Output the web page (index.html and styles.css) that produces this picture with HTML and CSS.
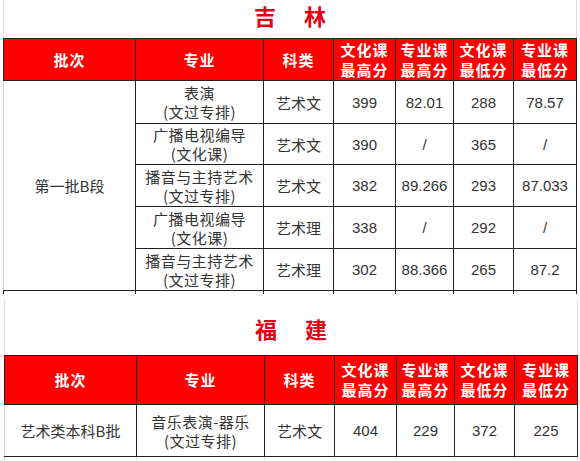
FILE: index.html
```html
<!DOCTYPE html>
<html lang="zh">
<head>
<meta charset="utf-8">
<link rel="stylesheet" href="styles.css">
</head>
<body>
<div class="page">
  <section class="sheet sheet-jilin">
    <div class="title title-jilin"><span>吉</span><span>林</span></div>
    <table class="scores">
      <colgroup>
        <col class="c-batch"><col class="c-major"><col class="c-type">
        <col class="c-s1"><col class="c-s2"><col class="c-s3"><col class="c-s4">
      </colgroup>
      <thead>
        <tr class="head head-jilin">
          <th>批次</th><th>专业</th><th>科类</th>
          <th>文化课<br>最高分</th><th>专业课<br>最高分</th><th>文化课<br>最低分</th><th>专业课<br>最低分</th>
        </tr>
      </thead>
      <tbody>
        <tr class="r43">
          <td class="batch" rowspan="5">第一批B段</td>
          <td class="major">表演<br>(文过专排)</td><td>艺术文</td>
          <td class="num">399</td><td class="num">82.01</td><td class="num">288</td><td class="num">78.57</td>
        </tr>
        <tr class="r41">
          <td class="major">广播电视编导<br>(文化课)</td><td>艺术文</td>
          <td class="num">390</td><td class="num">/</td><td class="num">365</td><td class="num">/</td>
        </tr>
        <tr class="r42">
          <td class="major">播音与主持艺术<br>(文过专排)</td><td>艺术文</td>
          <td class="num">382</td><td class="num">89.266</td><td class="num">293</td><td class="num">87.033</td>
        </tr>
        <tr class="r42">
          <td class="major">广播电视编导<br>(文化课)</td><td>艺术理</td>
          <td class="num">338</td><td class="num">/</td><td class="num">292</td><td class="num">/</td>
        </tr>
        <tr class="r42">
          <td class="major">播音与主持艺术<br>(文过专排)</td><td>艺术理</td>
          <td class="num">302</td><td class="num">88.366</td><td class="num">265</td><td class="num">87.2</td>
        </tr>
        <tr class="stub">
          <td class="first"></td><td></td><td></td><td></td><td></td><td></td><td></td>
        </tr>
      </tbody>
    </table>
  </section>

  <section class="sheet sheet-fujian">
    <div class="title title-fujian"><span>福</span><span>建</span></div>
    <table class="scores">
      <colgroup>
        <col class="c-batch"><col class="c-major"><col class="c-type">
        <col class="c-s1"><col class="c-s2"><col class="c-s3"><col class="c-s4">
      </colgroup>
      <thead>
        <tr class="head head-fujian">
          <th>批次</th><th>专业</th><th>科类</th>
          <th>文化课<br>最高分</th><th>专业课<br>最高分</th><th>文化课<br>最低分</th><th>专业课<br>最低分</th>
        </tr>
      </thead>
      <tbody>
        <tr class="r52">
          <td class="batch">艺术类本科B批</td>
          <td class="major">音乐表演-器乐<br>(文过专排)</td><td>艺术文</td>
          <td class="num">404</td><td class="num">229</td><td class="num">372</td><td class="num">225</td>
        </tr>
        <tr class="stub stub-light">
          <td class="first"></td><td></td><td></td><td></td><td></td><td></td><td></td>
        </tr>
      </tbody>
    </table>
  </section>
</div>
</body>
</html>
```
FILE: styles.css
```css
html, body {
  margin: 0;
  padding: 0;
  background: #ffffff;
}

body {
  font-family: "Noto Sans CJK SC", "Liberation Sans", sans-serif;
  color: #333333;
}

.page {
  width: 580px;
  display: flex;
  flex-direction: column;
}

.sheet {
  width: 574px;
  margin-left: 3px;
}

.sheet-fujian {
  margin-top: 6px;
  margin-left: 4px;
}

.title {
  display: flex;
  justify-content: center;
  align-items: center;
  gap: 28px;
  color: #e60012;
  font-size: 22px;
  font-weight: 700;
  border-left: 1px solid #dcdcdc;
  border-right: 1px solid #dcdcdc;
  box-sizing: border-box;
}

.title-jilin {
  height: 38px;
  padding-bottom: 8px;
  box-sizing: border-box;
}

.title-fujian {
  height: 55px;
}

.scores {
  width: 574px;
  border-collapse: collapse;
  table-layout: fixed;
}

.c-batch { width: 132px; }
.c-major { width: 128px; }
.c-type  { width: 70px; }
.c-s1    { width: 62px; }
.c-s2    { width: 58px; }
.c-s3    { width: 60px; }
.c-s4    { width: 63px; }

.scores th,
.scores td {
  border: 1px solid #222222;
  padding: 0;
  text-align: center;
  vertical-align: middle;
}

.scores th {
  background: #ff0000;
  color: #ffffff;
  font-weight: 700;
  font-size: 15px;
  line-height: 20px;
  letter-spacing: 1px;
}

.head-jilin { height: 42px; }
.head-fujian { height: 49px; }

.scores td {
  font-size: 15px;
  line-height: 19px;
  color: #333333;
}

.scores td.batch {
  border-left-color: #cfcfcf;
}

.scores td.major {
  letter-spacing: 0.5px;
}

.scores td.num {
  font-family: "Liberation Sans", Arial, sans-serif;
  font-size: 15px;
}

.r43 { height: 43px; }
.r41 { height: 41px; }
.r42 { height: 42px; }
.r52 { height: 52px; }

.stub td {
  height: 3px;
  border-bottom: none;
  border-top-color: #111111;
}

.stub td.first {
  border-left-color: #222222;
}

.stub-light td {
  border-left-color: #e0e0e0;
  border-right-color: #e0e0e0;
}

.stub-light td.first {
  border-left-color: #e0e0e0;
}
```
